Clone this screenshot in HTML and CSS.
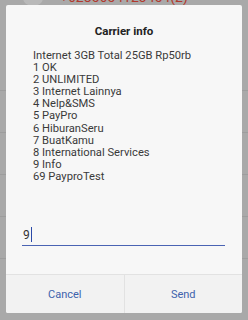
FILE: index.html
```html
<!DOCTYPE html>
<html>
<head>
<meta charset="utf-8">
<link rel="stylesheet" href="styles.css">
</head>
<body>
<div class="screen">
  <div class="list">
    <div class="row first">
      <span class="avatar"></span>
      <span class="number">+6285654123454(2)</span>
    </div>
    <div class="row"></div>
    <div class="row"></div>
    <div class="row"></div>
    <div class="row"></div>
    <div class="row last"></div>
  </div>
  <div class="dialog">
    <div class="title">Carrier info</div>
    <div class="message">
      <div>Internet 3GB Total 25GB Rp50rb</div>
      <div>1 OK</div>
      <div>2 UNLIMITED</div>
      <div>3 Internet Lainnya</div>
      <div>4 Nelp&amp;SMS</div>
      <div>5 PayPro</div>
      <div>6 HiburanSeru</div>
      <div>7 BuatKamu</div>
      <div>8 International Services</div>
      <div>9 Info</div>
      <div>69 PayproTest</div>
    </div>
    <div class="field">
      <span class="value">9</span><span class="cursor"></span>
    </div>
    <div class="buttons">
      <div class="btn">Cancel</div>
      <div class="btn">Send</div>
    </div>
  </div>
</div>
</body>
</html>
```
FILE: styles.css
```css
html, body {
  margin: 0;
  padding: 0;
  overflow: hidden;
}
body {
  width: 248px;
  height: 320px;
  background: #a9a9a9;
  font-family: Roboto, "Liberation Sans", sans-serif;
}
.screen {
  position: relative;
  width: 248px;
  height: 320px;
  overflow: hidden;
}
.list {
  display: flex;
  flex-direction: column;
  height: 320px;
}
.row {
  height: 41px;
  border-bottom: 1px solid #9d9d9d;
  flex-shrink: 0;
}
.row.last {
  flex: 1;
  border-bottom: 0;
}
.row.first {
  height: 90px;
  position: relative;
}
.avatar {
  position: absolute;
  left: 23px;
  top: -10px;
  width: 20px;
  height: 16px;
  border-radius: 50%;
  background: #b9b9b9;
}
.number {
  position: absolute;
  left: 60px;
  top: -11px;
  font-size: 14px;
  line-height: 16px;
  color: #b2392e;
}
.dialog {
  position: absolute;
  left: 6px;
  top: 5px;
  width: 236px;
  height: 308px;
  background: #f7f7f7;
  border-radius: 2px;
  display: flex;
  flex-direction: column;
  overflow: hidden;
}
.title {
  margin-top: 19px;
  text-align: center;
  font-weight: bold;
  font-size: 11.5px;
  line-height: 14px;
  color: #222;
}
.message {
  margin-top: 12px;
  padding-left: 27px;
  font-size: 11.2px;
  line-height: 12.1px;
  color: #3a3a3a;
}
.field {
  margin: 42px 17px 0 16px;
  border-bottom: 1.5px solid #4a63b3;
  display: flex;
  align-items: flex-end;
  padding-left: 1px;
  padding-bottom: 3px;
  box-sizing: border-box;
  height: 21px;
}
.value {
  font-size: 12px;
  line-height: 13px;
  color: #333;
}
.cursor {
  width: 1px;
  height: 15px;
  background: #2b4aa8;
  margin-left: 1px;
}
.buttons {
  margin-top: auto;
  height: 38px;
  border-top: 1px solid #e2e2e2;
  background: #f2f2f2;
  display: flex;
}
.btn {
  flex: 1;
  display: flex;
  align-items: center;
  justify-content: center;
  font-size: 11px;
  color: #4062ad;
}
.btn + .btn {
  border-left: 1px solid #e2e2e2;
}
```
